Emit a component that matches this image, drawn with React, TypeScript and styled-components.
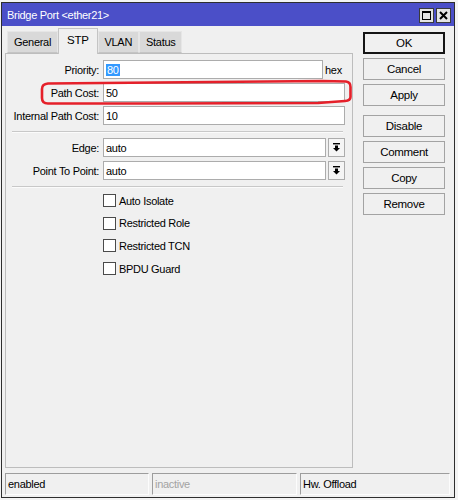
import React from "react";
import styled, { createGlobalStyle } from "styled-components";

const Global = createGlobalStyle`
  html, body { margin: 0; padding: 0; background: #f3f3f3; }
  body {
    font-family: "Liberation Sans", Arial, sans-serif;
    font-size: 11px;
    letter-spacing: -0.3px;
    color: #000;
  }
  #root { width: 458px; height: 500px; }
`;

const Stage = styled.div`
  position: relative;
  width: 458px;
  height: 500px;
  padding: 2px 0 0 1px;
  box-sizing: border-box;
  overflow: hidden;
`;

const Window = styled.div`
  width: 454px;
  height: 496px;
  box-sizing: border-box;
  border: 1px solid #2e2e2e;
  background: #f0f0f0;
  display: flex;
  flex-direction: column;
`;

const TitleBar = styled.div`
  height: 23px;
  flex: none;
  background: #4b4fc8;
  color: #fff;
  display: flex;
  align-items: center;
  padding: 0 3px 0 5px;
`;

const TitleText = styled.span`
  flex: 1;
`;

const TitleButtons = styled.div`
  display: flex;
  gap: 2px;
  margin-top: 1px;
`;

const TitleButton = styled.div`
  width: 15px;
  height: 15px;
  box-sizing: border-box;
  border: 1px solid #3a3a3a;
  background: #e4e4e4;
  display: flex;
  align-items: center;
  justify-content: center;
`;

const Body = styled.div`
  flex: 1;
  display: flex;
  flex-direction: column;
  padding: 0 3px 2px 3px;
  min-height: 0;
`;

const Main = styled.div`
  flex: 1;
  display: flex;
  min-height: 0;
`;

const LeftArea = styled.div`
  width: 348px;
  display: flex;
  flex-direction: column;
`;

const TabRow = styled.div`
  height: 27px;
  flex: none;
  display: flex;
  align-items: flex-end;
  padding-left: 2px;
  position: relative;
  z-index: 1;
`;

const Tab = styled.div<{ $active?: boolean }>`
  box-sizing: border-box;
  height: ${(p) => (p.$active ? 26 : 22)}px;
  padding: ${(p) => (p.$active ? "5px 8px 0 8px" : "4px 6px 0 6px")};
  background: ${(p) => (p.$active ? "#f0f0f0" : "#d9d9d9")};
  border: 1px solid ${(p) => (p.$active ? "#c4c4c4" : "#e6e6e6")};
  border-bottom: ${(p) => (p.$active ? "none" : "1px solid #c4c4c4")};
  margin-bottom: ${(p) => (p.$active ? "-1px" : "0")};
  font-size: ${(p) => (p.$active ? "11.5px" : "11px")};
`;

const Panel = styled.div`
  flex: 1;
  box-sizing: border-box;
  border: 1px solid #bdbdbd;
  padding: 6px 7px 0 0;
  display: flex;
  flex-direction: column;
  gap: 4px;
`;

const FormRow = styled.div`
  display: grid;
  grid-template-columns: 93px 1fr;
  column-gap: 4px;
  height: 19px;
  align-items: center;
`;

const Label = styled.div`
  text-align: right;
  white-space: nowrap;
`;

const FieldLine = styled.div`
  display: flex;
  height: 19px;
  min-width: 0;
`;

const Field = styled.div`
  flex: 1;
  min-width: 0;
  box-sizing: border-box;
  height: 19px;
  border: 1px solid #acacac;
  background: #fff;
  padding-left: 2px;
  display: flex;
  align-items: center;
`;

const Selected = styled.span`
  background: #3399ff;
  color: #fff;
  padding: 0 1px;
`;

const Unit = styled.div`
  width: 20px;
  margin-left: 2px;
  display: flex;
  align-items: center;
`;

const DropButton = styled.div`
  width: 17px;
  margin-left: 2px;
  box-sizing: border-box;
  border: 1px solid #acacac;
  background: #f5f5f5;
  display: flex;
  align-items: center;
  justify-content: center;
`;

const Separator = styled.div`
  height: 0;
  border-top: 1px solid #c8c8c8;
  border-bottom: 1px solid #fbfbfb;
  margin: 2px 2px 1px 6px;
`;

const CheckList = styled.div`
  display: flex;
  flex-direction: column;
  gap: 9.7px;
  padding-left: 97px;
  margin-top: 1px;
`;

const CheckRow = styled.div`
  display: flex;
  align-items: center;
  gap: 3px;
  height: 13px;
`;

const CheckBox = styled.div`
  width: 13px;
  height: 13px;
  box-sizing: border-box;
  border: 1px solid #4a4a4a;
  background: #fff;
`;

const ButtonCol = styled.div`
  margin-left: 10px;
  width: 82px;
  padding-top: 6px;
  display: flex;
  flex-direction: column;
  gap: 9px;
`;

const ButtonGroup = styled.div`
  display: flex;
  flex-direction: column;
  gap: 4px;
`;

const Button = styled.div<{ $default?: boolean }>`
  height: 22px;
  box-sizing: border-box;
  border: ${(p) => (p.$default ? "2px solid #151515" : "1px solid #a3a3a3")};
  background: #f0f0f0;
  display: flex;
  align-items: center;
  justify-content: center;
  font-size: 11.5px;
`;

const StatusBar = styled.div`
  flex: none;
  height: 22px;
  margin-top: 5px;
  display: flex;
  gap: 3px;
`;

const StatusCell = styled.div<{ $width: number; $dim?: boolean }>`
  width: ${(p) => p.$width}px;
  box-sizing: border-box;
  border-top: 1px solid #9d9d9d;
  border-left: 1px solid #9d9d9d;
  border-right: 1px solid #fcfcfc;
  border-bottom: 1px solid #fcfcfc;
  padding-left: 2px;
  display: flex;
  align-items: center;
  color: ${(p) => (p.$dim ? "#a3a3a3" : "#000")};
`;

const Annotation = styled.svg`
  position: absolute;
  left: 0;
  top: 0;
  pointer-events: none;
`;

const DropIcon = () => (
  <svg width="7" height="9" viewBox="0 0 7 9">
    <rect x="0" y="0" width="7" height="1.4" fill="#000" />
    <rect x="2" y="2.5" width="3" height="2.5" fill="#000" />
    <polygon points="0,5 7,5 3.5,8.6" fill="#000" />
  </svg>
);

const MaxIcon = () => (
  <svg width="9" height="9" viewBox="0 0 9 9">
    <rect x="0.5" y="0.5" width="8" height="8" fill="none" stroke="#000" strokeWidth="1" />
    <rect x="0.5" y="0.5" width="8" height="1.5" fill="#000" />
  </svg>
);

const CloseIcon = () => (
  <svg width="9" height="9" viewBox="0 0 9 9">
    <path d="M1 1 L8 8 M8 1 L1 8" stroke="#000" strokeWidth="2" />
  </svg>
);

const checks = ["Auto Isolate", "Restricted Role", "Restricted TCN", "BPDU Guard"];

export default function App() {
  return (
    <Stage>
      <Global />
      <Window>
        <TitleBar>
          <TitleText>Bridge Port &lt;ether21&gt;</TitleText>
          <TitleButtons>
            <TitleButton>
              <MaxIcon />
            </TitleButton>
            <TitleButton>
              <CloseIcon />
            </TitleButton>
          </TitleButtons>
        </TitleBar>
        <Body>
          <Main>
            <LeftArea>
              <TabRow>
                <Tab>General</Tab>
                <Tab $active>STP</Tab>
                <Tab>VLAN</Tab>
                <Tab>Status</Tab>
              </TabRow>
              <Panel>
                <FormRow>
                  <Label>Priority:</Label>
                  <FieldLine>
                    <Field>
                      <Selected>80</Selected>
                    </Field>
                    <Unit>hex</Unit>
                  </FieldLine>
                </FormRow>
                <FormRow>
                  <Label>Path Cost:</Label>
                  <FieldLine>
                    <Field>50</Field>
                  </FieldLine>
                </FormRow>
                <FormRow>
                  <Label>Internal Path Cost:</Label>
                  <FieldLine>
                    <Field>10</Field>
                  </FieldLine>
                </FormRow>
                <Separator />
                <FormRow>
                  <Label>Edge:</Label>
                  <FieldLine>
                    <Field>auto</Field>
                    <DropButton>
                      <DropIcon />
                    </DropButton>
                  </FieldLine>
                </FormRow>
                <FormRow>
                  <Label>Point To Point:</Label>
                  <FieldLine>
                    <Field>auto</Field>
                    <DropButton>
                      <DropIcon />
                    </DropButton>
                  </FieldLine>
                </FormRow>
                <Separator />
                <CheckList>
                  {checks.map((c) => (
                    <CheckRow key={c}>
                      <CheckBox />
                      <span>{c}</span>
                    </CheckRow>
                  ))}
                </CheckList>
              </Panel>
            </LeftArea>
            <ButtonCol>
              <ButtonGroup>
                <Button $default>OK</Button>
                <Button>Cancel</Button>
                <Button>Apply</Button>
              </ButtonGroup>
              <ButtonGroup>
                <Button>Disable</Button>
                <Button>Comment</Button>
                <Button>Copy</Button>
                <Button>Remove</Button>
              </ButtonGroup>
            </ButtonCol>
          </Main>
          <StatusBar>
            <StatusCell $width={144}>enabled</StatusCell>
            <StatusCell $width={145} $dim>
              inactive
            </StatusCell>
            <StatusCell $width={150}>Hw. Offload</StatusCell>
          </StatusBar>
        </Body>
      </Window>
      <Annotation width="458" height="500" viewBox="0 0 458 500">
        <path
          d="M48 83.5 L322 81 L346 81.5 Q350.5 82 350.5 87 L350.5 97 Q350.5 100.5 345 101 L318 103 L150 103.5 L48 103.5 Q42 103.5 42 98 L42 89 Q42 84 48 83.5 Z"
          fill="none"
          stroke="#e5202a"
          strokeWidth="2.6"
          strokeLinejoin="round"
        />
      </Annotation>
    </Stage>
  );
}
